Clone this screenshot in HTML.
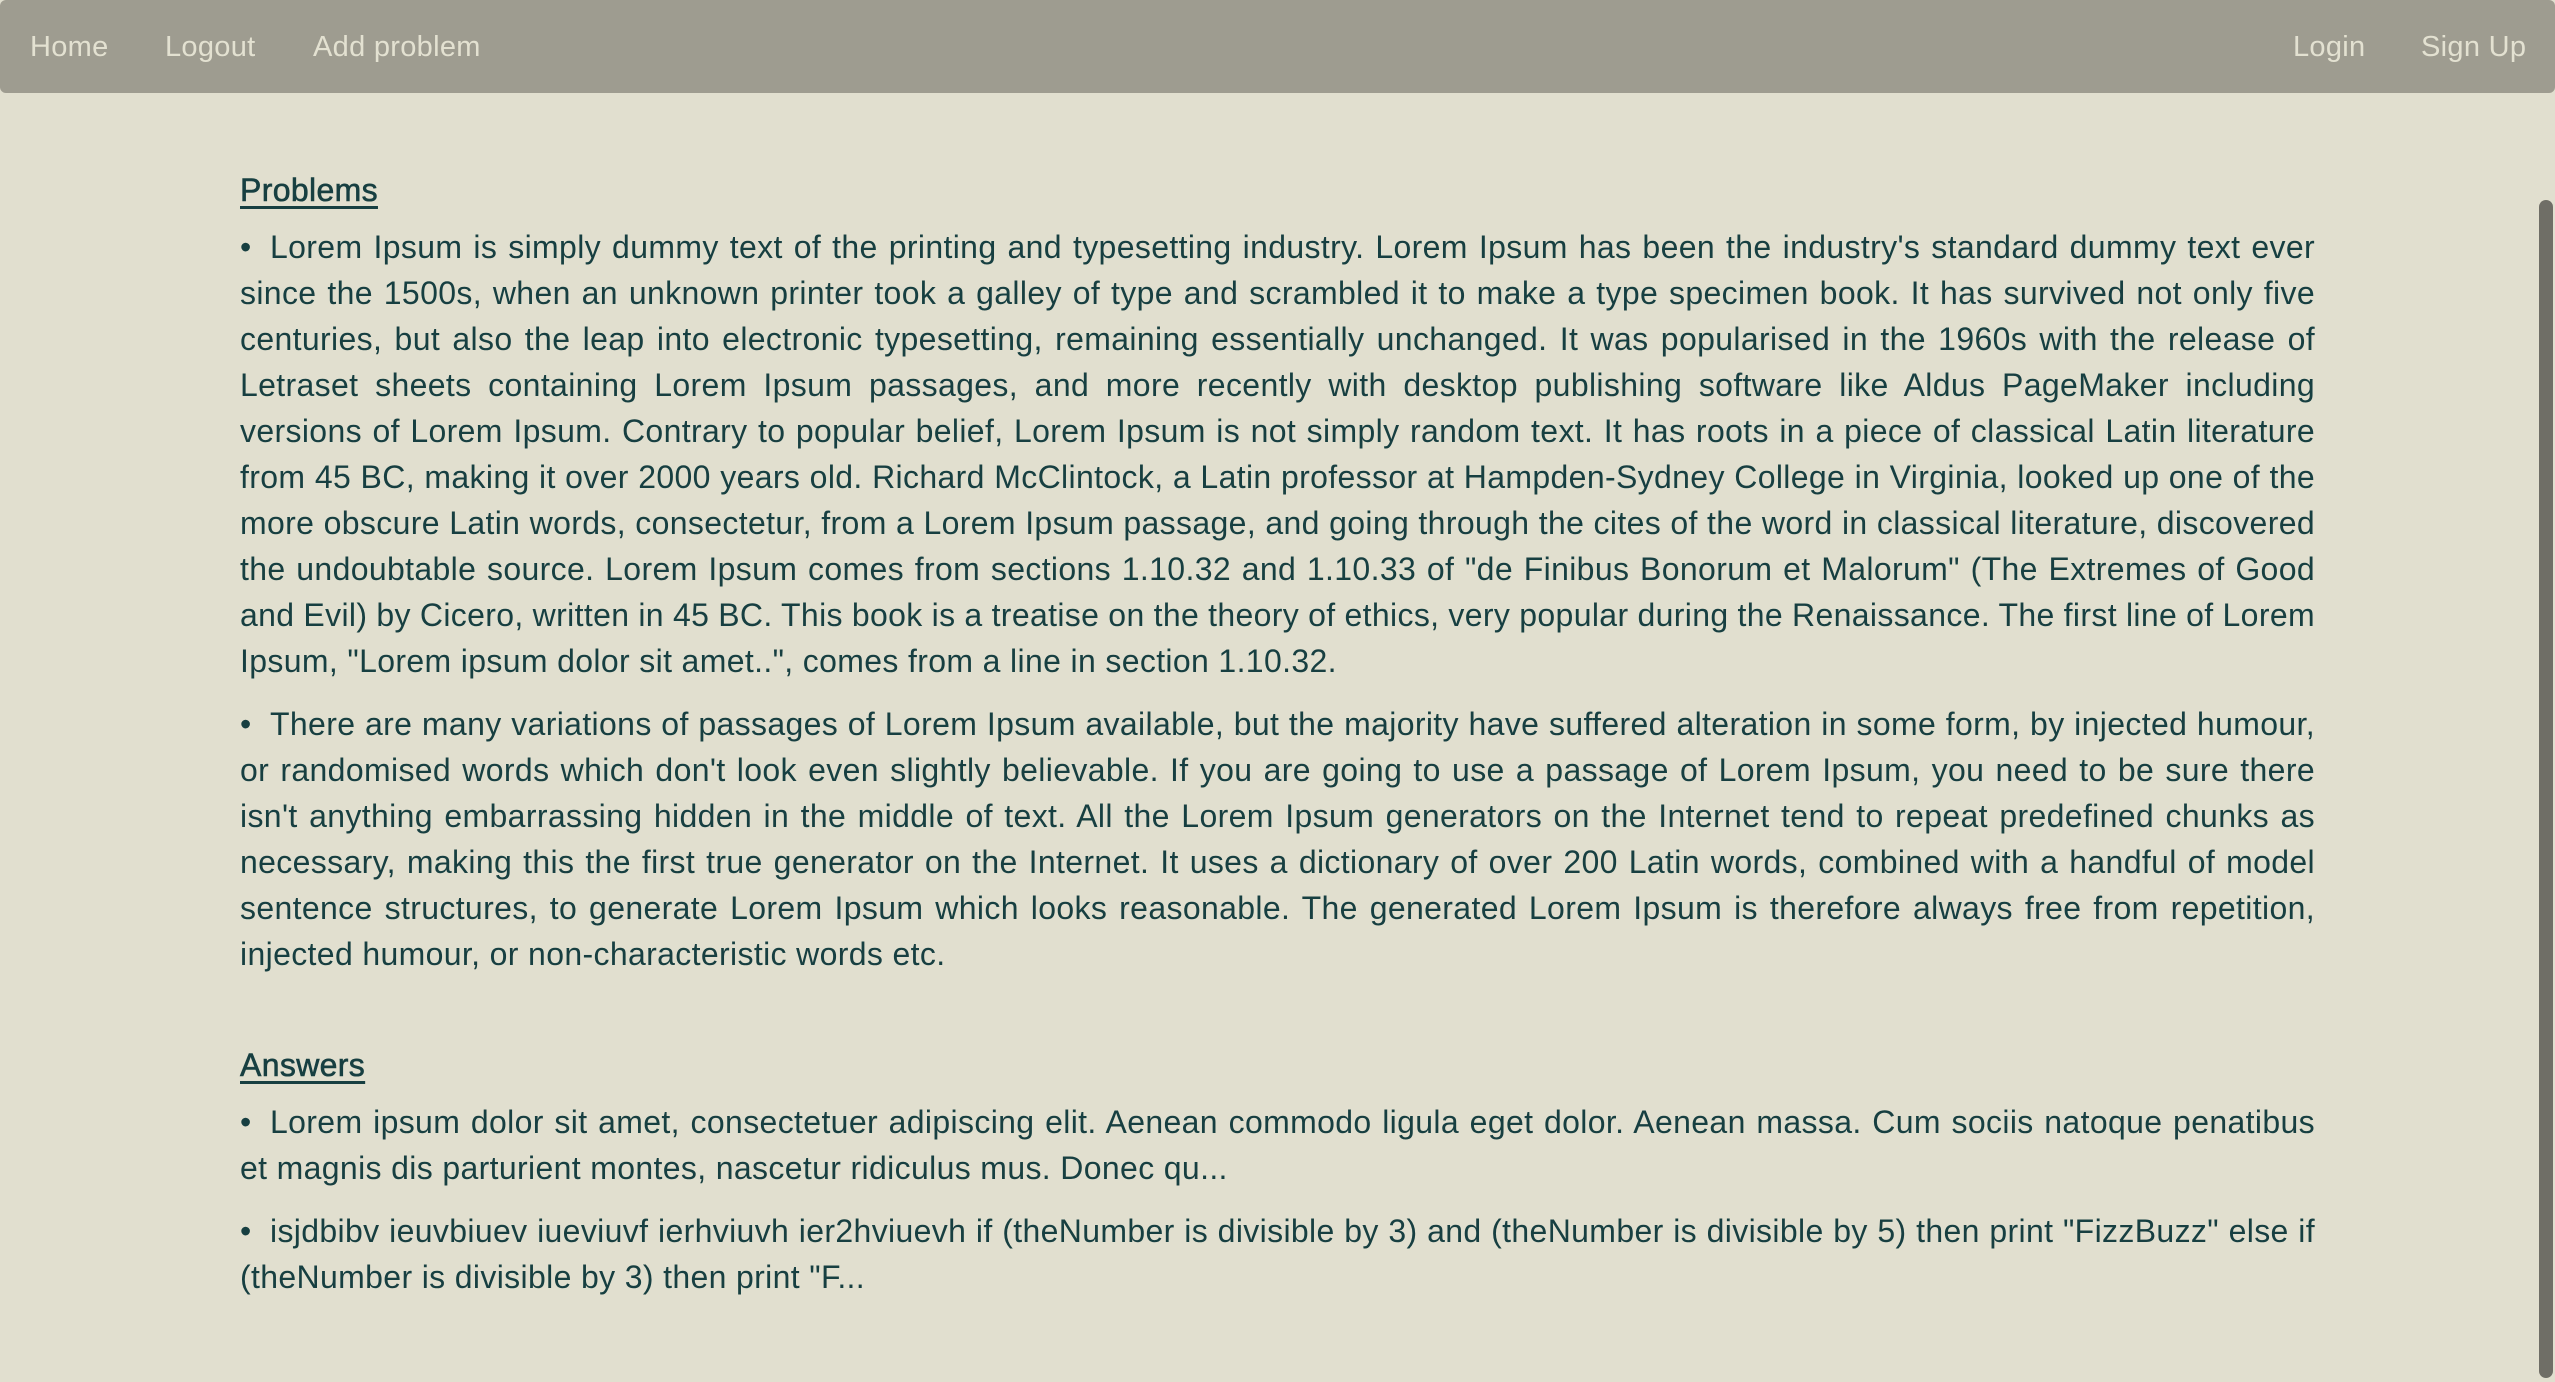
<!DOCTYPE html>
<html><head><meta charset="utf-8"><style>
html,body{margin:0;padding:0}
body{width:2555px;height:1382px;background:#e1dfcf;font-family:"Liberation Sans",Helvetica,Arial,sans-serif;overflow:hidden;position:relative;color:#173f41}
.nav{position:absolute;left:0;top:0;width:2555px;height:93px;background:#9e9c90;border-radius:6px}
.nav a{position:absolute;top:29px;font-size:29px;color:#e3e1d1;text-decoration:none;line-height:36px;letter-spacing:0.3px}
.content{position:absolute;left:240px;top:167px;width:2075px;font-size:32px;line-height:46px;letter-spacing:0.35px}
h2{font-size:32px;font-weight:normal;text-decoration:underline;text-decoration-thickness:3px;text-underline-offset:5px;margin:0 0 11px 0;line-height:46px;-webkit-text-stroke:0.6px #173f41}
p{margin:0 0 17px 0;text-align:justify}
.b{display:inline-block;width:30px}
.t{word-spacing:-2.5px}
.sc{position:absolute;left:2539px;top:200px;width:14px;height:1178px;background:#6f6e66;border-radius:7px}
</style></head><body>
<div class="nav">
<a style="left:30px">Home</a>
<a style="left:165px">Logout</a>
<a style="left:313px">Add problem</a>
<a style="left:2293px">Login</a>
<a style="left:2421px">Sign Up</a>
</div>
<div class="content">
<h2>Problems</h2>
<p><span class="b">•</span>Lorem Ipsum is simply dummy text of the printing and typesetting industry. Lorem Ipsum has been the industry's standard dummy text ever since the 1500s, when an unknown printer took a galley of type and scrambled it to make a type specimen book. It has survived not only five centuries, but also the leap into electronic typesetting, remaining essentially unchanged. It was popularised in the 1960s with the release of Letraset sheets containing Lorem Ipsum passages, and more recently with desktop publishing software like Aldus PageMaker including versions of Lorem Ipsum. Contrary to popular belief, Lorem Ipsum is not simply random text. It has roots in a piece of classical Latin literature from 45 BC, making it over 2000 years old. Richard McClintock, a Latin professor at Hampden-Sydney College in Virginia, looked up one of the more obscure Latin words, consectetur, from a Lorem Ipsum passage, and going through the cites of the word in classical literature, discovered the undoubtable source. Lorem Ipsum comes from sections 1.10.32 and 1.10.33 of "de Finibus Bonorum et Malorum" (The Extremes of Good <span class="t">and Evil) by Cicero, written in 45 BC. This book is a treatise on the theory of ethics, very popular during the Renaissance. The first line of Lorem</span> Ipsum, "Lorem ipsum dolor sit amet..", comes from a line in section 1.10.32.</p>
<p><span class="b">•</span>There are many variations of passages of Lorem Ipsum available, but the majority have suffered alteration in some form, by injected humour, or randomised words which don't look even slightly believable. If you are going to use a passage of Lorem Ipsum, you need to be sure there isn't anything embarrassing hidden in the middle of text. All the Lorem Ipsum generators on the Internet tend to repeat predefined chunks as necessary, making this the first true generator on the Internet. It uses a dictionary of over 200 Latin words, combined with a handful of model sentence structures, to generate Lorem Ipsum which looks reasonable. The generated Lorem Ipsum is therefore always free from repetition, injected humour, or non-characteristic words etc.</p>
<h2 style="margin-top:65px">Answers</h2>
<p><span class="b">•</span>Lorem ipsum dolor sit amet, consectetuer adipiscing elit. Aenean commodo ligula eget dolor. Aenean massa. Cum sociis natoque penatibus et magnis dis parturient montes, nascetur ridiculus mus. Donec qu...</p>
<p><span class="b">•</span>isjdbibv ieuvbiuev iueviuvf ierhviuvh ier2hviuevh if (theNumber is divisible by 3) and (theNumber is divisible by 5) then print "FizzBuzz" else if (theNumber is divisible by 3) then print "F...</p>
</div>
<div class="sc"></div>
</body></html>
